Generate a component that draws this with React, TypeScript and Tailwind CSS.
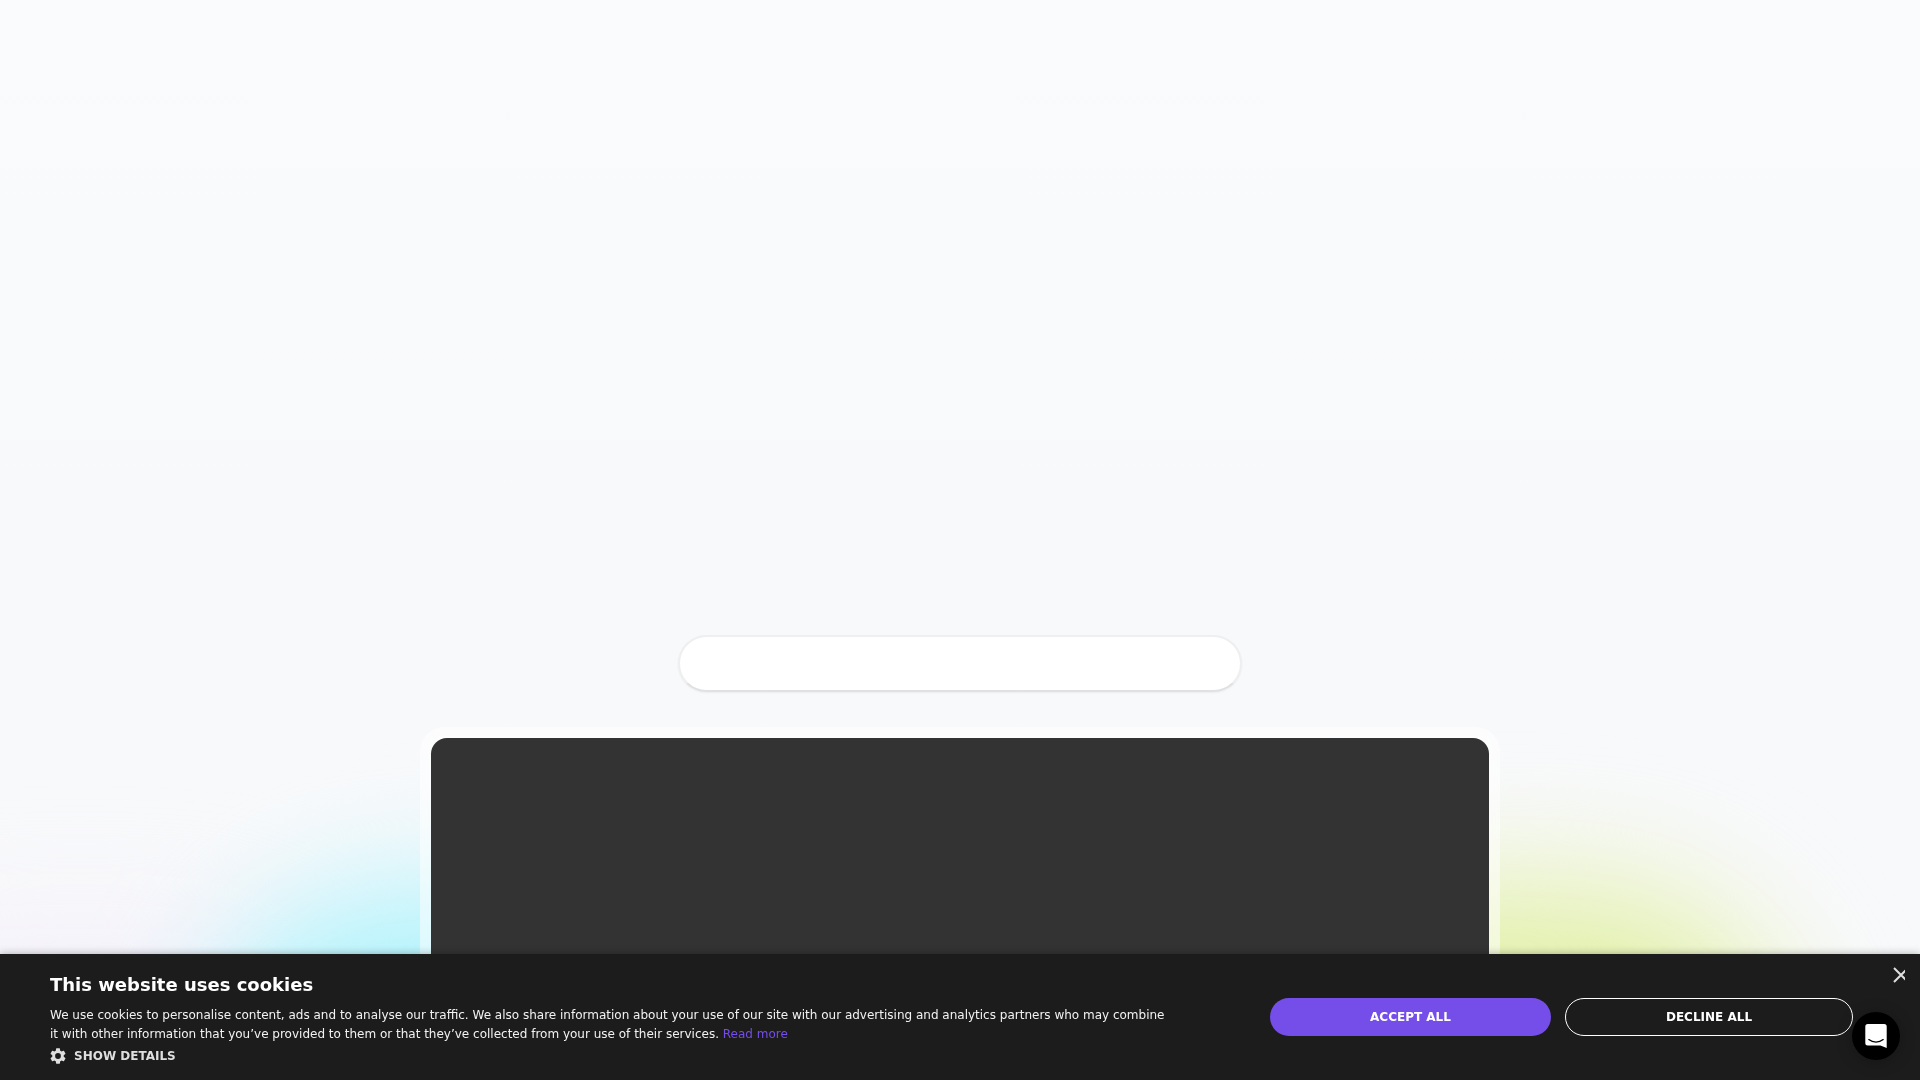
import { useState } from 'react';

const GearIcon = () => (
  <svg viewBox="2 2 20 20" className="w-4 h-4" fill="currentColor" aria-hidden="true">
    <path d="M19.14 12.94c.04-.3.06-.61.06-.94 0-.32-.02-.64-.07-.94l2.03-1.58a.49.49 0 0 0 .12-.61l-1.92-3.32a.49.49 0 0 0-.59-.22l-2.39.96c-.5-.38-1.03-.7-1.62-.94l-.36-2.54a.48.48 0 0 0-.48-.41h-3.84a.47.47 0 0 0-.47.41l-.36 2.54c-.59.24-1.13.57-1.62.94l-2.39-.96a.48.48 0 0 0-.59.22L2.74 8.87a.48.48 0 0 0 .12.61l2.03 1.58c-.05.3-.09.63-.09.94s.02.64.07.94l-2.03 1.58a.49.49 0 0 0-.12.61l1.92 3.32c.12.22.37.29.59.22l2.39-.96c.5.38 1.03.7 1.62.94l.36 2.54c.05.24.24.41.48.41h3.84c.24 0 .44-.17.47-.41l.36-2.54c.59-.24 1.13-.56 1.62-.94l2.39.96c.22.08.47 0 .59-.22l1.92-3.32a.48.48 0 0 0-.12-.61l-2.01-1.58zM12 15.6a3.6 3.6 0 1 1 0-7.2 3.6 3.6 0 0 1 0 7.2z" />
  </svg>
);

const ChatIcon = () => (
  <svg viewBox="0 0 22 24" className="w-[22px] h-6" aria-hidden="true">
    <path d="M2.800 0h16.400a2.500 2.500 0 0 1 2.500 2.500V24l-6.200-2.400H2.800a2.500 2.500 0 0 1-2.500-2.500V2.500A2.500 2.500 0 0 1 2.800 0z" fill="#fff" />
    <path d="M3.800 15.600c4.200 3.300 10.200 3.300 14.400 0" fill="none" stroke="#000" strokeWidth="1.300" strokeLinecap="round" />
  </svg>
);

const Hero = () => (
  <main className="relative flex-1 overflow-hidden px-6">
    {/* colour glows behind the video */}
    <div className="absolute -left-40 top-[940px] h-60 w-[480px] rounded-full bg-[#f3effa] blur-3xl" />
    <div className="absolute left-[200px] top-[885px] h-[400px] w-[640px] rounded-full bg-[#b2f3fc] blur-[60px]" />
    <div className="absolute right-[130px] top-[885px] h-[400px] w-[640px] rounded-full bg-[#e2f0a8] blur-[64px]" />
    <div className="relative mx-auto mt-[635px] h-[57px] max-w-[564px] rounded-full border-2 border-[#edeff1] border-b-[#dfe1e3] bg-white shadow-xs" />
    <div className="relative mx-auto mt-[35px] max-w-[1080px] rounded-3xl bg-white/50 p-[11px] backdrop-blur-sm">
      <div className="aspect-video rounded-2xl bg-[#333]" />
    </div>
  </main>
);

const CookieBanner = ({ onClose }: { onClose: () => void }) => (
  <section
    aria-label="Cookies"
    className="fixed inset-x-0 bottom-0 flex items-center bg-[#1c1c1c] pl-[50px] pr-[67px] text-white shadow-[0_0_8px_rgba(0,0,0,0.3)]"
  >
    <div className="min-w-0 flex-1 pt-[19px] pb-[15px] pr-10">
      <h2 className="text-lg leading-6 font-bold">This website uses cookies</h2>
      <p className="mt-[9px] max-w-[1116px] text-xs leading-[19px] text-[#f2f2f2]">
        We use cookies to personalise content, ads and to analyse our traffic. We also share information about your use of our site with our advertising and analytics partners who may combine it with other information that you’ve provided to them or that they’ve collected from your use of their services.{' '}
        <a href="#" className="text-[#754ee9]">Read more</a>
      </p>
      <button type="button" className="mt-[3px] flex items-center gap-2 text-xs leading-[18px] font-bold text-[#dfdfdf]">
        <GearIcon />
        SHOW DETAILS
      </button>
    </div>
    <div className="flex gap-[14px]">
      <button type="button" onClick={onClose} className="h-[38px] w-[281px] rounded-full bg-[#754ee9] text-xs font-bold">
        ACCEPT ALL
      </button>
      <button type="button" onClick={onClose} className="h-[38px] w-[288px] rounded-full border border-white text-xs font-bold">
        DECLINE ALL
      </button>
    </div>
    <button type="button" aria-label="Close" onClick={onClose} className="absolute right-[15px] top-[13px] h-4 w-3 overflow-hidden text-[#dfdfdf]">
      <svg viewBox="0 0 12 16" className="h-4 w-3" fill="none" stroke="currentColor" strokeWidth="2" aria-hidden="true">
        <path d="M1 1l14 14M1 15L15 1" />
      </svg>
    </button>
  </section>
);

const App = () => {
  const [isOpen, setIsOpen] = useState(true);

  return (
    <div className="flex h-screen flex-col overflow-hidden bg-linear-to-b from-[#fafbfd] via-[#f8f9fb] to-[#f9f9fb] font-['DejaVu_Sans',sans-serif]">
      <Hero />
      {isOpen && <CookieBanner onClose={() => setIsOpen(false)} />}
      <button
        type="button"
        aria-label="Open chat"
        className="fixed bottom-5 right-5 flex h-12 w-12 items-center justify-center rounded-full bg-black shadow-[0_2px_16px_rgba(0,0,0,0.25)]"
      >
        <ChatIcon />
      </button>
    </div>
  );
};

export default App;
